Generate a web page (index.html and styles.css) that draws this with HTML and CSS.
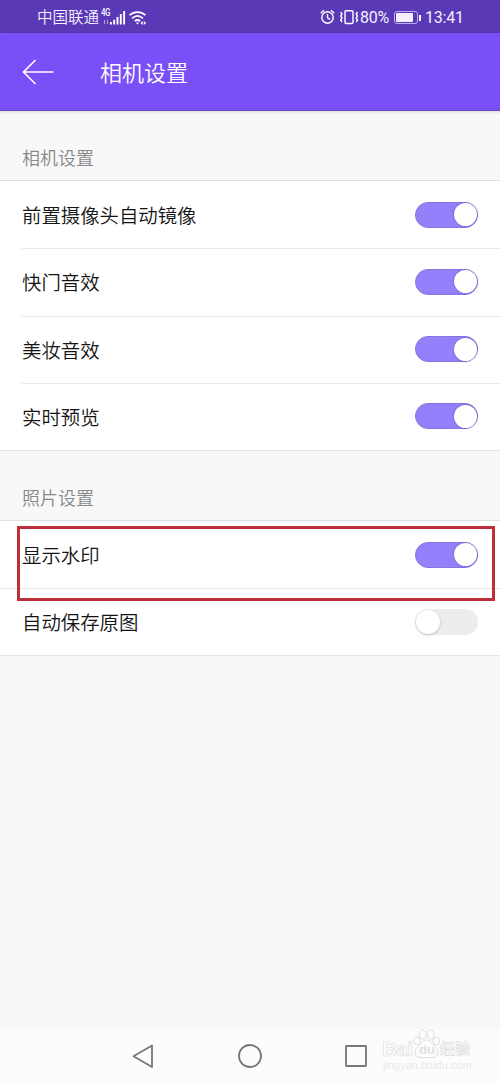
FILE: index.html
```html
<!DOCTYPE html>
<html lang="zh-CN">
<head>
<meta charset="utf-8">
<title>相机设置</title>
<link rel="stylesheet" href="styles.css">
</head>
<body>
<div class="screen">
  <div class="status">
    <span class="carrier">中国联通</span>
    <span class="network">4G</span>
    <svg class="signals" width="48" height="20" viewBox="0 0 48 20">
      <g fill="none" stroke="#fff" stroke-width="1.1">
        <path d="M3.500 13v4M6.500 13v4" opacity=".5"/>
        <path stroke-width="1.9" d="M9.900 15v2.600M13.200 12.800v4.800M16.500 10v7.600M19.800 7v10.600M23.100 4v13.600"/>
        <path stroke-width="1.7" d="M28.500 8.200c4.700-4.200 11.300-4.200 16 0M31.100 11.300c3.300-2.900 7.500-2.900 10.800 0M33.800 14.200c1.800-1.500 3.800-1.500 5.400 0"/>
      </g>
      <path fill="#fff" d="M34.800 15.500h3.400l-1.700 2.100zM39.500 16l2.200-2v4zM45 16l-2.200-2v4z"/>
    </svg>
    <div class="status-right">
      <svg width="36" height="18" viewBox="0 0 36 18" fill="none" stroke="#fff" stroke-width="1.400">
        <circle cx="8.500" cy="9.500" r="5.700"/>
        <path d="M8.500 6v3.800l2.600 1.500M1.700 5.200L5 2.300M15.300 5.200L12 2.300"/>
        <rect x="26" y="2.700" width="8" height="12.800" rx="1"/>
        <path d="M21.700 4l1.300 2-1.300 2 1.300 2-1.300 2 1.300 2"/>
      </svg>
      <svg class="buzz" width="5" height="18" viewBox="0 0 5 18" fill="none" stroke="#fff" stroke-width="1.400"><path d="M3.500 4L2.200 6l1.300 2-1.300 2 1.300 2-1.300 2"/></svg>
      <span class="percent">80%</span>
      <span class="battery"><span class="charge"></span></span>
      <span class="clock">13:41</span>
    </div>
  </div>
  <header class="header">
    <svg width="32" height="26" viewBox="0 0 32 26" fill="none" stroke="#fff" stroke-width="1.600"><path d="M31.500 13H1.500M13.500 1L1.500 13l12 12"/></svg>
    <h1 class="title">相机设置</h1>
  </header>
  <main class="content">
    <h2 class="section">相机设置</h2>
    <div class="group">
      <div class="row"><span>前置摄像头自动镜像</span><span class="switch on"><i class="knob"></i></span></div>
      <div class="row"><span>快门音效</span><span class="switch on"><i class="knob"></i></span></div>
      <div class="row"><span>美妆音效</span><span class="switch on"><i class="knob"></i></span></div>
      <div class="row"><span>实时预览</span><span class="switch on"><i class="knob"></i></span></div>
    </div>
    <h2 class="section">照片设置</h2>
    <div class="group full">
      <div class="row"><span>显示水印</span><span class="switch on"><i class="knob"></i></span></div>
      <div class="row"><span>自动保存原图</span><span class="switch"><i class="knob"></i></span></div>
      <div class="highlight"></div>
    </div>
  </main>
  <nav class="nav">
    <svg width="22" height="26" viewBox="0 0 22 26"><path d="M20 2.500v21.500L1.500 13.300z"/></svg>
    <svg width="26" height="26" viewBox="0 0 26 26"><circle cx="13" cy="13" r="11"/></svg>
    <svg width="24" height="26" viewBox="0 0 24 26"><rect x="2" y="3" width="20" height="20" rx=".5"/></svg>
  </nav>
  <div class="watermark">
    <div class="brand">
      <span class="latin">Bai</span>
      <span class="paw">
        <svg width="27" height="30" viewBox="0 0 27 30"><ellipse cx="4" cy="12" rx="3.300" ry="4"/><ellipse cx="9.700" cy="5.500" rx="3.300" ry="4.500"/><ellipse cx="17.800" cy="5.500" rx="3.300" ry="4.500"/><ellipse cx="23.300" cy="12" rx="3.300" ry="4"/><path d="M13.500 11c4.500 0 5.500 4 9 7s3.500 10.500-2.500 10.500H7C1 28.500.500 21 4.500 18s4.500-7 9-7z"/></svg>
        <span class="du">du</span>
      </span>
      <span class="cn">经验</span>
    </div>
    <div class="site">jingyan.baidu.com</div>
  </div>
</div>
</body>
</html>
```
FILE: styles.css
```css
* { box-sizing: border-box; }
body { margin: 0; font-family: Roboto, "Noto Sans CJK SC", sans-serif; }
.screen {
  position: relative;
  width: 500px;
  height: 1083px;
  display: flex;
  flex-direction: column;
  background: #f8f8f8;
  overflow: hidden;
}
svg { display: block; flex: none; }
.status {
  height: 33px;
  display: flex;
  align-items: center;
  padding: 1px 36px 0 37px;
  background: #5a39b6;
  color: #f4f0ff;
  font-size: 15.5px;
  white-space: nowrap;
}
.carrier { padding-top: 1px; line-height: 32px; font-weight: 350; }
.network {
  width: 10px;
  margin: -9px -10px 0 2px;
  font-size: 8px;
  font-weight: 500;
  line-height: 9px;
  letter-spacing: -.5px;
  transform: scaleY(1.25);
}
.status-right { display: flex; align-items: center; margin-left: auto; }
.buzz { margin-left: -1px; }
.percent { margin-left: 1px; width: 30px; font-size: 16px; letter-spacing: -.2px; }
.battery {
  position: relative;
  width: 24px;
  height: 13px;
  margin: 0 7px 0 4px;
  padding: 1px;
  border: 1px solid #c0adf0;
  border-radius: 3px;
}
.battery::after {
  content: "";
  position: absolute;
  right: -4px;
  top: 3px;
  width: 2px;
  height: 6px;
  background: #fff;
}
.charge { display: block; width: 17px; height: 9px; background: #f4efff; border-radius: 1px; }
.clock { width: 39px; font-size: 16px; letter-spacing: -.2px; }
.header {
  height: 78px;
  display: flex;
  align-items: center;
  padding-left: 22px;
  background: #7950f7;
  border-bottom: 1px solid #6a48d0;
  box-shadow: 0 1px 3px #00000024;
  color: #fff;
  z-index: 1;
}
.title { margin: 4px 0 0 46px; font-size: 22px; font-weight: 350; line-height: 30px; }
.content { flex: 1; }
.section {
  margin: 0;
  height: 69px;
  padding: 35px 22px 0;
  color: #888;
  font-size: 18px;
  font-weight: 350;
  line-height: 26px;
}
.group {
  position: relative;
  height: 271px;
  display: flex;
  flex-direction: column;
  background: #fff;
  border-top: 1px solid #e0e0e0;
  border-bottom: 1px solid #e4e4e4;
}
.row {
  position: relative;
  flex: 1;
  display: flex;
  align-items: center;
  justify-content: space-between;
  padding: 0 22px;
  color: #141414;
  font-size: 19.4px;
  font-weight: 350;
}
.row + .row::before {
  content: "";
  position: absolute;
  top: 0;
  left: 22px;
  right: 0;
  height: 1px;
  background: #e8e8e8;
}
.full { height: 136px; }
.full .row + .row::before { left: 0; }
.switch {
  width: 63px;
  height: 26px;
  display: flex;
  align-items: center;
  padding: 1px;
  border-radius: 13px;
  background: #ededed;
}
.knob { width: 24px; height: 24px; border-radius: 50%; background: #fff; box-shadow: 0 1px 3px #0003; }
.on { justify-content: flex-end; background: #9580fc; border: 1px solid #8874dc; padding: 0; }
.on .knob { width: 23px; height: 23px; box-shadow: 0 0 2px #44308cb0; }
.highlight {
  position: absolute;
  left: 17px;
  top: 5px;
  width: 478px;
  height: 75px;
  border: 3px solid #bc303a;
}
.nav {
  height: 54px;
  display: flex;
  align-items: center;
  padding-left: 132px;
  gap: 83px;
  background: #fcfcfc;
}
.nav svg { fill: none; stroke: #777; stroke-width: 1.8; stroke-linejoin: round; }
.nav svg:last-child { margin-left: -2px; }
.watermark {
  position: absolute;
  left: 382px;
  top: 1028px;
  width: 92px;
  color: #fdfdfd;
  white-space: nowrap;
}
.brand { display: flex; align-items: flex-end; height: 32px; }
.latin {
  width: 31px;
  font: bold 21px/22px "Liberation Sans", sans-serif;
  letter-spacing: -.8px;
  -webkit-text-stroke: .7px #dedede;
}
.paw { position: relative; width: 27px; height: 31px; }
.paw svg { fill: #fdfdfd; stroke: #dedede; stroke-width: 1; }
.du {
  position: absolute;
  left: 6px;
  top: 13px;
  color: #e2e2e2;
  font: bold 13px/15px "Liberation Sans", sans-serif;
}
.cn { font-size: 15px; line-height: 22px; font-weight: 700; -webkit-text-stroke: .6px #dadada; }
.site {
  padding-left: 1px;
  color: #e9e9e9;
  font: 11px/11px "Liberation Sans", sans-serif;
}
```
